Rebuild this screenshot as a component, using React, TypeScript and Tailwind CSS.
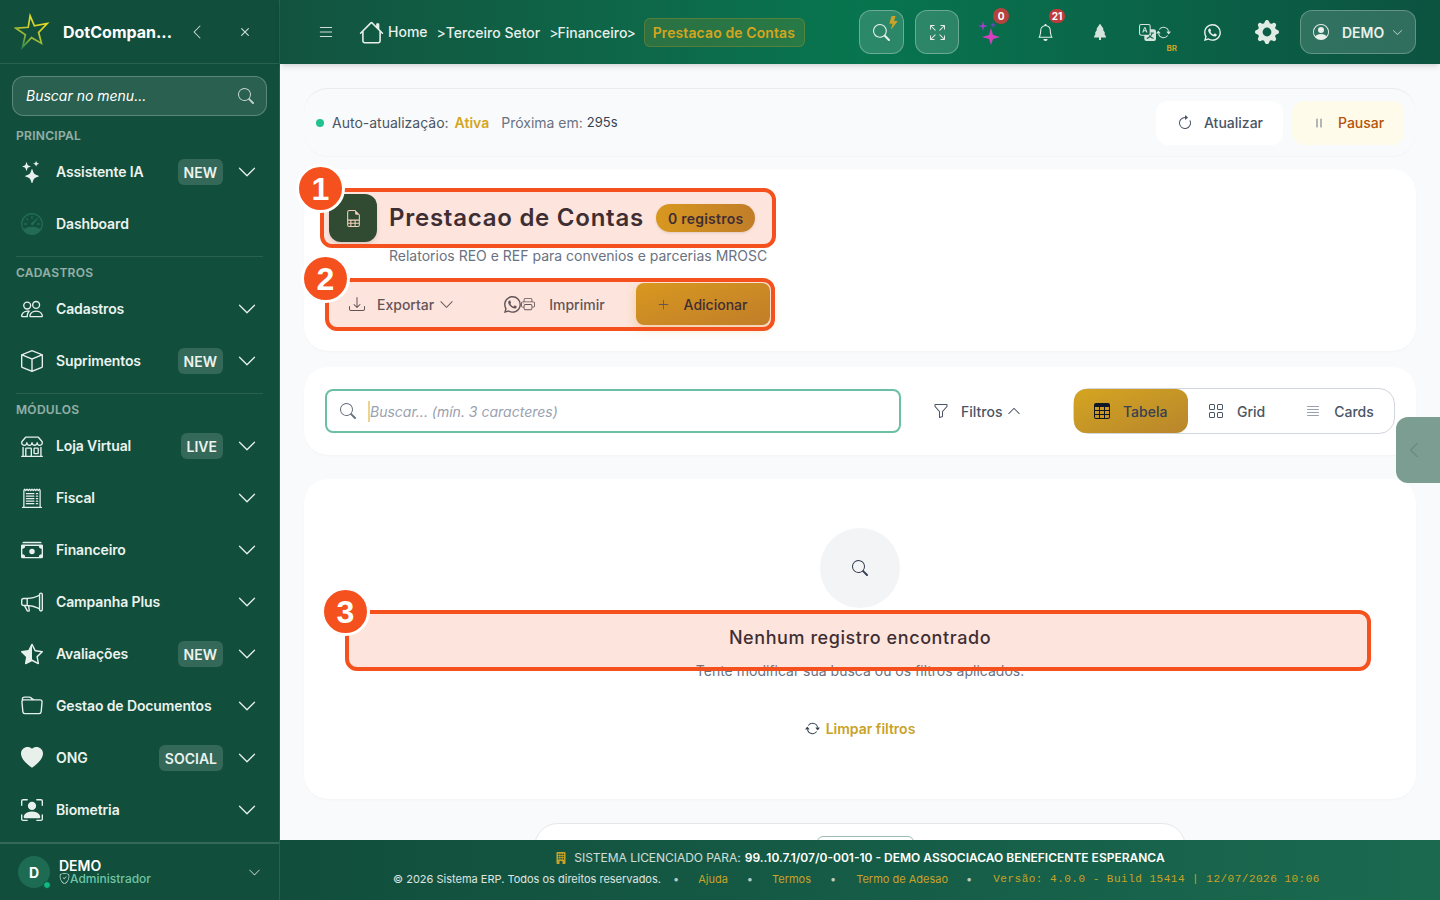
import React from 'react';
import {
  BsArrowClockwise, BsArrowRepeat, BsArrowsFullscreen, BsBell, BsBox, BsBuildingFill, BsCashStack, BsChevronDown,
  BsChevronLeft, BsChevronUp, BsDownload, BsFileEarmarkSpreadsheet, BsFolder, BsFunnel, BsGearFill, BsGrid,
  BsHeartFill, BsHouse, BsJustify, BsLightningFill, BsList, BsMegaphone, BsPause, BsPeople, BsPersonBoundingBox,
  BsPersonCircle, BsPlusLg, BsPrinter, BsReceiptCutoff, BsSearch, BsShieldCheck, BsShop, BsSpeedometer, BsStarHalf,
  BsStars, BsTable, BsTranslate, BsTreeFill, BsWhatsapp, BsX,
} from 'react-icons/bs';

const sections = [
  {
    label: 'PRINCIPAL',
    items: [
      { icon: BsStars, name: 'Assistente IA', badge: 'NEW', chevron: true },
      { icon: BsSpeedometer, name: 'Dashboard', dim: true },
    ],
  },
  {
    label: 'CADASTROS',
    items: [
      { icon: BsPeople, name: 'Cadastros', chevron: true },
      { icon: BsBox, name: 'Suprimentos', badge: 'NEW', chevron: true },
    ],
  },
  {
    label: 'MÓDULOS',
    items: [
      { icon: BsShop, name: 'Loja Virtual', badge: 'LIVE', chevron: true },
      { icon: BsReceiptCutoff, name: 'Fiscal', chevron: true, size: 20 },
      { icon: BsCashStack, name: 'Financeiro', chevron: true },
      { icon: BsMegaphone, name: 'Campanha Plus', chevron: true },
      { icon: BsStarHalf, name: 'Avaliações', badge: 'NEW', chevron: true },
      { icon: BsFolder, name: 'Gestao de Documentos', chevron: true },
      { icon: BsHeartFill, name: 'ONG', badge: 'SOCIAL', chevron: true },
      { icon: BsPersonBoundingBox, name: 'Biometria', chevron: true },
    ],
  },
];

const Logo = () => (
  <svg width="36" height="38" viewBox="0 0 38 38" fill="none">
    <defs>
      <linearGradient id="logoStar" x1="28" y1="2" x2="10" y2="36" gradientUnits="userSpaceOnUse">
        <stop offset="0" stopColor="#f4e31c" />
        <stop offset="0.55" stopColor="#b9c431" />
        <stop offset="1" stopColor="#2f8a4b" />
      </linearGradient>
    </defs>
    <path d="M17 2 L21.5 12.5 L35 10 L26 19.5 L29 31 L18.5 25 L9 35 L12 22 L2 15 L15 14 Z" stroke="url(#logoStar)" strokeWidth="1.8" strokeLinejoin="miter" />
  </svg>
);

const Sparkle = () => (
  <svg width="26" height="26" viewBox="0 0 26 26">
    <path d="M14 9 L16 16 L23 18 L16 20 L14 26 L12 20 L5 18 L12 16 Z" fill="#d83fc0" />
    <path d="M6 2 L7 6 L11 7 L7 8 L6 12 L5 8 L1 7 L5 6 Z" fill="#a43fd0" />
    <path d="M16 3 L16.7 5.3 L19 6 L16.7 6.7 L16 9 L15.3 6.7 L13 6 L15.3 5.3 Z" fill="#7a3fd0" />
  </svg>
);

const Callout = ({ n, frame, badge }: { n: number; frame: string; badge: string }) => (
  <>
    <div className={`absolute rounded-xl border-4 border-[#f4511e] bg-[#f4511e]/15 ${frame}`}></div>
    <div className={`absolute flex h-[49px] w-[49px] items-center justify-center rounded-full border-[3px] border-white bg-[#f4511e] font-['Liberation_Sans',sans-serif] text-[32px] font-bold text-white ${badge}`}>
      {n}
    </div>
  </>
);

const Sidebar = () => (
  <aside className="flex h-full w-[280px] shrink-0 flex-col border-r border-white/10 bg-[#114e3c]">
    <div className="flex h-[64px] shrink-0 items-center border-b border-white/10 pl-[14px]">
      <Logo />
      <span className="ml-[13px] w-[112px] text-[16px] font-bold whitespace-nowrap text-white">DotCompan...</span>
      <BsChevronLeft size={16} className="ml-[14px] text-white/80" />
      <BsX size={18} className="ml-[31px] text-white/80" />
    </div>

    <div className="flex-1 px-3 pt-3">
      <div className="flex h-[40px] items-center justify-between rounded-xl border border-white/25 bg-white/10 pr-[12px] pl-[13px]">
        <span className="mb-[2px] text-[14px] text-white italic">Buscar no menu...</span>
        <BsSearch size={16} className="text-white/70" />
      </div>

      <nav className="-mx-3 mt-[11px] px-4">
        {sections.map((section, index) => (
          <div key={section.label}>
            {index > 0 && <div className="mt-[6px] mb-[7px] h-px bg-white/10"></div>}
            <div className="mb-[3px] h-4 text-[12px] leading-[18px] font-semibold tracking-[0.3px] text-white/55">{section.label}</div>
            {section.items.map((item) => (
              <div key={item.name} className="flex h-[52px] items-center pr-[6px] pl-[5px]">
                <span className={`flex w-[22px] justify-center ${item.dim ? 'text-[#236b55]' : 'text-[#e8f0ec]'}`}>
                  <item.icon size={item.size ?? 22} />
                </span>
                <span className="mb-[2px] ml-[13px] text-[14px] font-semibold tracking-[-0.12px] whitespace-nowrap text-[#ebf3ef]">{item.name}</span>
                {item.badge && (
                  <span className="ml-auto flex h-[26px] items-center rounded-md bg-white/15 px-[6px] text-[14px] font-semibold text-[#ebf3ef]">
                    {item.badge}
                  </span>
                )}
                {item.chevron && (
                  <BsChevronDown size={20} className={`text-[#e8f0ec] ${item.badge ? 'ml-[14px]' : 'ml-auto'}`} />
                )}
              </div>
            ))}
          </div>
        ))}
      </nav>
    </div>

    <div className="flex h-[58px] shrink-0 items-center border-t-2 border-white/15 pr-[18px] pl-[18px]">
      <div className="relative flex h-8 w-8 items-center justify-center rounded-full bg-[#1d6b52] text-[14px] font-bold text-white">
        D
        <span className="absolute -right-[1px] -bottom-[1px] h-2 w-2 rounded-full border border-[#114e3c] bg-[#10b981]"></span>
      </div>
      <div className="ml-[9px] flex flex-col">
        <span className="text-[14px] leading-[13px] font-semibold text-white">DEMO</span>
        <span className="flex items-center text-[12px] leading-[13px] font-medium text-[#6fc5a3]">
          <BsShieldCheck size={11} className="text-[#bfe3d3]" />
          Administrador
        </span>
      </div>
      <BsChevronDown size={13} className="ml-auto text-white/70" />
    </div>
  </aside>
);

const Topbar = () => (
  <header className="z-10 flex h-[64px] shrink-0 items-center bg-gradient-to-r from-[#12533f] via-[#07754f] to-[#0c5340] pr-6 pl-[37px] shadow-md">
    <BsList size={18} className="text-white/80" />
    <BsHouse size={25} className="ml-[24px] text-[#e8f0ec]" />
    <span className="relative -top-[1px] ml-[4px] text-[14px] font-medium text-[#e8f0ec]">Home</span>
    <span className="ml-[9px] text-[14px] text-[#e8f0ec]">&gt;</span>
    <span className="text-[14px] font-medium text-[#e8f0ec]">Terceiro Setor</span>
    <span className="ml-[9px] text-[14px] text-[#e8f0ec]">&gt;</span>
    <span className="-ml-[1px] text-[14px] font-medium text-[#e8f0ec]">Financeiro</span>
    <span className="-ml-[1px] text-[14px] text-[#e8f0ec]">&gt;</span>
    <span className="ml-[8px] flex h-[29px] items-center rounded-md border border-[#d4a520]/25 bg-[#d4a520]/15 pr-[9px] pl-[8px] text-[14px] font-semibold tracking-[0.1px] text-[#d4a520]">
      Prestacao de Contas
    </span>

    <div className="ml-auto flex items-center gap-[11px]">
      <button className="relative flex h-[44px] w-[45px] items-center justify-center rounded-xl border border-white/30 bg-white/15">
        <BsSearch size={17} className="text-[#e8f0ec]" />
        <BsLightningFill size={13} className="absolute top-[5px] right-[3px] text-[#c9a227]" />
      </button>
      <button className="flex h-[44px] w-[44px] items-center justify-center rounded-xl border border-white/30 bg-white/15">
        <BsArrowsFullscreen size={15} className="text-[#e8f0ec]" />
      </button>
      <div className="relative -ml-[2px] flex h-[44px] w-[44px] items-center justify-center">
        <Sparkle />
        <span className="absolute top-[-2px] right-[3px] flex h-[16px] w-[16px] items-center justify-center rounded-full bg-[#b5423f] text-[10px] font-bold text-white">0</span>
      </div>
      <div className="relative flex h-[44px] w-[44px] items-center justify-center">
        <BsBell size={17} className="text-[#e8f0ec]" />
        <span className="absolute top-[-1px] right-[2px] flex h-[14px] w-[16px] items-center justify-center rounded-full bg-[#c23b3b] text-[10px] font-bold text-white">21</span>
      </div>
      <div className="flex h-[44px] w-[44px] items-center justify-center">
        <BsTreeFill size={16} className="text-[#d5e5de]" />
      </div>
      <div className="relative flex h-[44px] w-[44px] items-center justify-center">
        <BsTranslate size={17} className="text-[#d5e5de]" />
        <BsArrowRepeat size={15} className="text-[#d5e5de]" />
        <span className="absolute right-0 bottom-0 text-[8px] leading-3 font-bold text-[#c9a227]">BR</span>
      </div>
      <div className="ml-[2px] flex h-[44px] w-[44px] items-center justify-center">
        <BsWhatsapp size={17} className="text-[#e8f0ec]" />
      </div>
      <div className="flex h-[44px] w-[44px] items-center justify-center">
        <BsGearFill size={24} className="text-[#e0ebe6]" />
      </div>
      <button className="flex h-[44px] w-[116px] items-center rounded-xl border border-white/25 bg-white/15 pl-[12px]">
        <BsPersonCircle size={16} className="text-[#e8f0ec]" />
        <span className="ml-[13px] text-[14px] font-semibold text-[#e8f0ec]">DEMO</span>
        <BsChevronDown size={11} className="ml-[8px] text-white/70" />
      </button>
    </div>
  </header>
);

const Content = () => (
  <main className="flex-1 overflow-hidden bg-[#f9fafb] px-6 pt-6">
    <section className="flex h-[69px] items-center justify-between rounded-3xl border-t border-b border-t-gray-200/80 border-b-gray-100 bg-[#f9fafb] pr-3 pl-3">
      <div className="flex items-center text-[14px] text-gray-600">
        <span className="h-2 w-2 rounded-full bg-[#22c38e]"></span>
        <span className="ml-2">Auto-atualização:</span>
        <span className="ml-[6px] font-semibold text-[#d4a520]">Ativa</span>
        <span className="ml-3 text-gray-500">Próxima em:</span>
        <span className="mt-[1px] ml-1 text-[13px] text-gray-700">295s</span>
      </div>
      <div className="flex items-center gap-[9px]">
        <button className="flex h-[44px] w-[127px] items-center rounded-xl bg-white pl-[21px] text-[14px] font-medium text-gray-600">
          <BsArrowClockwise size={16} />
          <span className="ml-[11px]">Atualizar</span>
        </button>
        <button className="flex h-[44px] w-[112px] items-center rounded-xl bg-[#fffbeb] pl-[19px] text-[14px] font-medium text-[#b45309]">
          <BsPause size={16} className="text-gray-500" />
          <span className="ml-[11px]">Pausar</span>
        </button>
      </div>
    </section>

    <section className="mt-3 h-[182px] rounded-3xl bg-white pt-[25px] pl-[25px] shadow-[0_1px_2px_rgba(0,0,0,0.03)]">
      <div className="flex items-center">
        <div className="flex h-12 w-12 items-center justify-center rounded-xl bg-[#0f4a37] shadow-md">
          <BsFileEarmarkSpreadsheet size={17} className="text-[#f5e9dc]" />
        </div>
        <h1 className="ml-3 text-[24px] font-semibold tracking-[0.75px] text-gray-800">Prestacao de Contas</h1>
        <span className="ml-[12px] flex h-[28px] items-center rounded-full bg-gradient-to-r from-[#d4a520] to-[#b8862b] px-[12px] text-[14px] font-semibold tracking-[0.25px] text-gray-800 shadow-sm">
          0 registros
        </span>
      </div>
      <p className="mt-[4px] ml-[60px] text-[14px] leading-5 text-gray-500">Relatorios REO e REF para convenios e parcerias MROSC</p>
      <div className="mt-[16px] flex h-[44px] items-center pl-5 text-[14px] font-medium text-gray-600">
        <BsDownload size={16} />
        <span className="ml-[12px]">Exportar</span>
        <BsChevronDown size={15} className="ml-[5px]" />
        <BsWhatsapp size={17} className="ml-[50px]" />
        <BsPrinter size={14} />
        <span className="ml-[14px]">Imprimir</span>
        <button className="ml-[31px] flex h-[42px] w-[134px] items-center rounded-lg bg-gradient-to-br from-[#d4a520] to-[#b8862b] pl-[21px] text-gray-800 shadow-[0_4px_12px_rgba(212,165,32,0.3)]">
          <BsPlusLg size={13} className="text-gray-600" />
          <span className="ml-[14px]">Adicionar</span>
        </button>
      </div>
    </section>

    <section className="mt-4 flex h-[88px] items-center rounded-3xl bg-white pr-[21px] pl-[21px] shadow-[0_1px_2px_rgba(0,0,0,0.03)]">
      <div className="flex h-[44px] w-[576px] items-center rounded-lg border-2 border-[#6bbfa6] pl-[13px]">
        <BsSearch size={16} className="text-gray-500" />
        <span className="ml-[12px] border-l-2 border-[#ecd48c] text-[14px] leading-[21px] text-gray-400 italic">Buscar... (mín. 3 caracteres)</span>
      </div>
      <div className="ml-[32px] flex items-center text-[14px] font-medium text-gray-600">
        <BsFunnel size={16} />
        <span className="ml-[12px]">Filtros</span>
        <BsChevronUp size={14} className="ml-[5px]" />
      </div>
      <div className="ml-auto flex h-[46px] w-[322px] items-center rounded-2xl border border-gray-300 text-[14px] font-medium text-gray-600">
        <button className="flex h-[44px] w-[114px] items-center rounded-xl bg-gradient-to-br from-[#d4a520] to-[#b8862b] pl-[20px] text-gray-700">
          <BsTable size={16} className="text-gray-900" />
          <span className="ml-[13px]">Tabela</span>
        </button>
        <BsGrid size={16} className="ml-[20px]" />
        <span className="ml-[13px]">Grid</span>
        <BsJustify size={16} className="ml-[40px] text-gray-400" />
        <span className="ml-[13px]">Cards</span>
      </div>
    </section>

    <section className="mt-6 flex h-[320px] flex-col items-center rounded-3xl bg-white pt-[49px] shadow-[0_1px_2px_rgba(0,0,0,0.03)]">
      <div className="flex h-20 w-20 items-center justify-center rounded-full bg-gray-100">
        <BsSearch size={16} className="text-gray-700" />
      </div>
      <h2 className="mt-[17px] text-[18px] leading-[26px] font-medium tracking-[0.58px] text-gray-800">Nenhum registro encontrado</h2>
      <p className="mt-[10px] text-[14px] leading-5 text-gray-500">Tente modificar sua busca ou os filtros aplicados.</p>
      <button className="mt-[37px] flex items-center text-[14px] font-semibold text-[#c9a227]">
        <BsArrowRepeat size={15} className="text-gray-700" />
        <span className="ml-[6px]">Limpar filtros</span>
      </button>
    </section>

    <section className="mx-auto mt-6 flex h-[40px] w-[652px] justify-center rounded-t-3xl border border-gray-200 bg-white pt-3">
      <div className="ml-[11px] h-10 w-[97px] rounded-t-md border border-[#9dbcb0]"></div>
    </section>
  </main>
);

const Footer = () => (
  <footer className="z-10 flex h-[60px] shrink-0 flex-col items-center bg-gradient-to-r from-[#114e3c] to-[#1a6a50] pt-[9px] text-white">
    <div className="flex h-[18px] items-center text-[12px]">
      <BsBuildingFill size={12} className="text-[#c9a227]" />
      <span className="ml-[7px] tracking-[-0.03px] text-white/80">SISTEMA LICENCIADO PARA:</span>
      <span className="ml-[4px] font-semibold text-white">99..10.7.1/07/0-001-10 - DEMO ASSOCIACAO BENEFICENTE ESPERANCA</span>
    </div>
    <div className="mt-[3px] -ml-[7px] flex h-[18px] items-center text-[11px] text-[#c9a227]">
      <span className="text-white/85">© 2026 Sistema ERP. Todos os direitos reservados.</span>
      <span className="ml-[12px] text-white/70">•</span>
      <span className="ml-[19px]">Ajuda</span>
      <span className="ml-[19px] text-white/70">•</span>
      <span className="ml-[19px]">Termos</span>
      <span className="ml-[19px] text-white/70">•</span>
      <span className="ml-[20px]">Termo de Adesao</span>
      <span className="ml-[18px] text-white/70">•</span>
      <span className="ml-[21px] font-['Liberation_Mono',monospace] tracking-[0.5px]">Versão: 4.0.0 - Build 15414 | 12/07/2026 10:06</span>
    </div>
  </footer>
);

const App: React.FC = () => {
  return (
    <div className="relative flex h-[900px] w-[1440px] overflow-hidden font-[Inter,sans-serif]">
      <Sidebar />
      <div className="flex h-full min-w-0 flex-1 flex-col">
        <Topbar />
        <Content />
        <Footer />
      </div>

      {/* side tab */}
      <div className="absolute top-[417px] right-0 flex h-[66px] w-[44px] items-center justify-start rounded-l-xl bg-[#7c9d91] pl-[9px]">
        <BsChevronLeft size={18} className="text-[#6a8a7e]" />
      </div>

      {/* tour highlights */}
      <Callout n={1} frame="left-[320px] top-[188px] h-[60px] w-[456px]" badge="left-[296px] top-[164px]" />
      <Callout n={2} frame="left-[325px] top-[278px] h-[53px] w-[450px]" badge="left-[301px] top-[254px]" />
      <Callout n={3} frame="left-[345px] top-[610px] h-[61px] w-[1026px]" badge="left-[321px] top-[587px]" />
    </div>
  );
};

export default App;
